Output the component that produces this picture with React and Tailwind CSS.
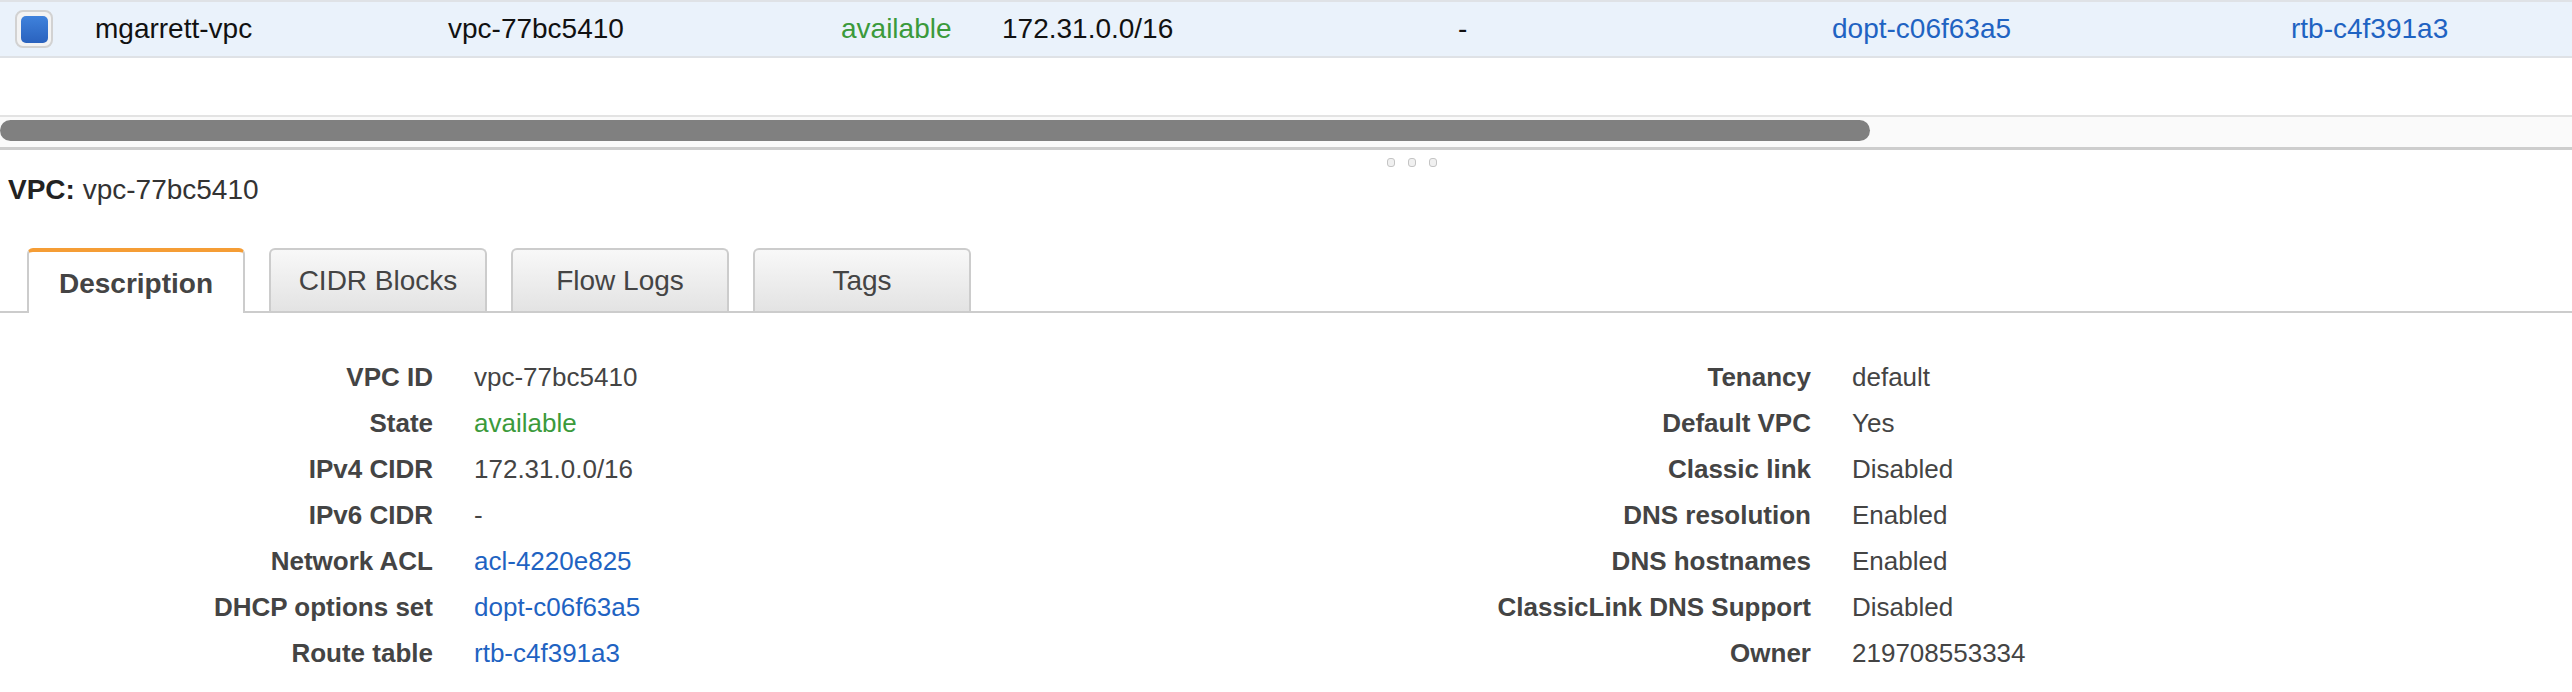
import React from 'react';

const leftRows = [
    { label: 'VPC ID', value: 'vpc-77bc5410' },
    { label: 'State', value: 'available', tone: 'green' },
    { label: 'IPv4 CIDR', value: '172.31.0.0/16' },
    { label: 'IPv6 CIDR', value: '-' },
    { label: 'Network ACL', value: 'acl-4220e825', tone: 'link' },
    { label: 'DHCP options set', value: 'dopt-c06f63a5', tone: 'link' },
    { label: 'Route table', value: 'rtb-c4f391a3', tone: 'link' },
];

const rightRows = [
    { label: 'Tenancy', value: 'default' },
    { label: 'Default VPC', value: 'Yes' },
    { label: 'Classic link', value: 'Disabled' },
    { label: 'DNS resolution', value: 'Enabled' },
    { label: 'DNS hostnames', value: 'Enabled' },
    { label: 'ClassicLink DNS Support', value: 'Disabled' },
    { label: 'Owner', value: '219708553334' },
];

const toneClass = (tone) =>
    tone === 'green' ? 'text-[#3b9a3b]' : tone === 'link' ? 'text-[#1f63c2]' : 'text-[#444]';

const DetailColumn = ({ rows, labelWidth }) => (
    <div className="grid gap-x-[41px]" style={{ gridTemplateColumns: `${labelWidth}px auto` }}>
        {rows.map((row) => (
            <React.Fragment key={row.label}>
                <div className="text-right font-bold text-[#444] leading-[46px] whitespace-nowrap">{row.label}</div>
                <div className={`leading-[46px] whitespace-nowrap ${toneClass(row.tone)}`}>{row.value}</div>
            </React.Fragment>
        ))}
    </div>
);

const App = () => {
    const tabs = ['CIDR Blocks', 'Flow Logs', 'Tags'];

    return (
        <div className="w-[2572px] h-[692px] overflow-hidden bg-white font-['Liberation_Sans',Arial,sans-serif]">
            {/* Selected table row */}
            <div className="h-[58px] flex items-center bg-[#eaf2fb] border-y-2 border-[#dfe2e6] text-[28px] text-[#111]">
                <div className="w-[95px] pl-[15px] flex items-center">
                    <div className="w-[38px] h-[38px] rounded-[8px] border-2 border-[#d2d2d2] bg-[#f3f3f3] flex items-center justify-center">
                        <div className="w-[27px] h-[27px] rounded-[5px] bg-gradient-to-b from-[#3f82dc] to-[#2a62be]" />
                    </div>
                </div>
                <div className="w-[353px]">mgarrett-vpc</div>
                <div className="w-[393px]">vpc-77bc5410</div>
                <div className="w-[161px] text-[#3b9a3b]">available</div>
                <div className="w-[456px]">172.31.0.0/16</div>
                <div className="w-[374px]">-</div>
                <div className="w-[459px] text-[#1f63c2]">dopt-c06f63a5</div>
                <div className="text-[#1f63c2]">rtb-c4f391a3</div>
            </div>

            {/* Horizontal scrollbar */}
            <div className="mt-[57px] h-[35px] bg-[#fafafa] border-t-2 border-t-[#e3e3e3] border-b-[3px] border-b-[#cdcdcd] pt-[3px]">
                <div className="w-[1870px] h-[21px] rounded-full bg-[#808080]" />
            </div>

            {/* Resize handle */}
            <div className="h-[24px] flex items-center gap-[13px] pl-[1387px]">
                {[0, 1, 2].map((i) => (
                    <div key={i} className="w-[8px] h-[9px] rounded-[3px] border border-[#c4c4c4] bg-[#f0f0f0]" />
                ))}
            </div>

            {/* Header */}
            <div className="h-[32px] leading-[32px] pl-[8px] text-[28px] text-[#333]">
                <span className="font-bold text-[#222]">VPC:</span> vpc-77bc5410
            </div>

            {/* Tabs */}
            <div className="mt-[42px] h-[65px] flex items-end gap-[24px] pl-[27px] border-b-2 border-[#cccccc] text-[28px]">
                <div className="-mb-[2px] w-[218px] h-[65px] bg-white border-2 border-b-0 border-[#cccccc] border-t-4 border-t-[#f59d35] rounded-t-[6px] flex items-center justify-center pt-[3px] font-bold text-[#444]">
                    Description
                </div>
                {tabs.map((tab) => (
                    <div
                        key={tab}
                        className="w-[218px] h-[63px] bg-gradient-to-b from-[#f8f8f8] to-[#e3e3e3] border-2 border-b-0 border-[#cccccc] rounded-t-[6px] flex items-center justify-center pt-[1px] text-[#444]"
                    >
                        {tab}
                    </div>
                ))}
            </div>

            {/* Description details */}
            <div className="pt-[41px] flex text-[26px]">
                <div className="w-[1300px]">
                    <DetailColumn rows={leftRows} labelWidth={433} />
                </div>
                <div>
                    <DetailColumn rows={rightRows} labelWidth={511} />
                </div>
            </div>
        </div>
    );
};

export default App;
